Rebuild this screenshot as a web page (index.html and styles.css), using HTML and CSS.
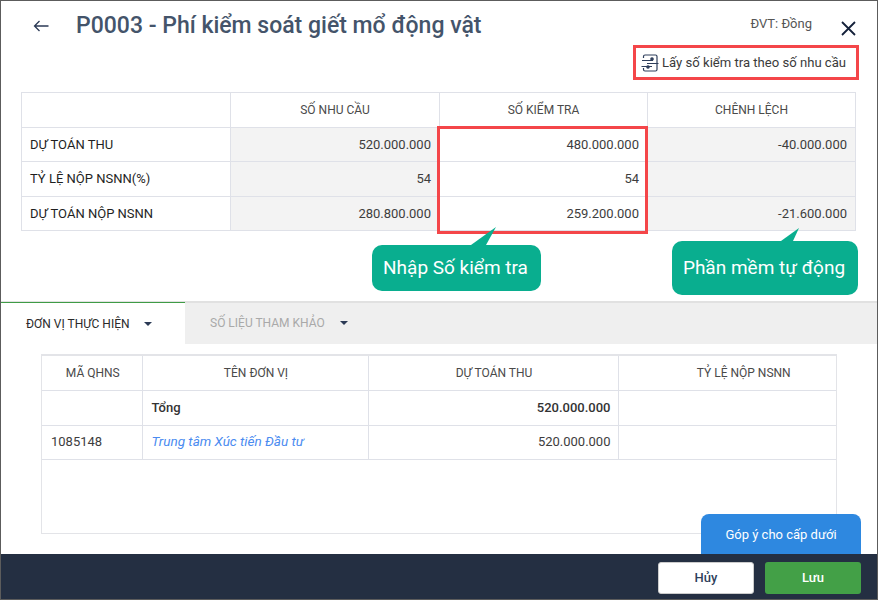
FILE: index.html
```html
<!DOCTYPE html>
<html lang="en">
<head>
    <meta charset="UTF-8">
    <title>P0003 - Phí kiểm soát giết mổ động vật</title>
    <link rel="stylesheet" href="styles.css">
</head>
<body>
    <div class="dialog">
        <div class="header">
            <svg class="back" width="16" height="14" viewBox="0 0 16 14"><path d="M15.500 7H1.500M6.500 2 1.500 7l5 5" fill="none" stroke="#2b3a55" stroke-width="1.300"/></svg>
            <h1 class="title">P0003 - Phí kiểm soát giết mổ động vật</h1>
            <span class="unit">ĐVT: Đồng</span>
            <svg class="close" width="15" height="15" viewBox="0 0 15 15"><path d="M1 1 14 14M14 1 1 14" fill="none" stroke="#14213a" stroke-width="1.800"/></svg>
        </div>

        <div class="action-row">
            <div class="get-number">
                <svg width="18" height="18" viewBox="0 0 18 18" fill="none" stroke="#2f3f5c" stroke-width="1.200">
                    <path d="M2.500 4V2.500A1.500 1.500 0 0 1 4 1H14.500A1.500 1.500 0 0 1 16 2.500V15.500A1.500 1.500 0 0 1 14.500 17H4A1.500 1.500 0 0 1 2.500 15.500V14"/>
                    <path d="M1 6.500H12M6 9.500H17.500M.5 12.500H11"/>
                    <circle cx="11" cy="5" r="1.200" fill="#2f3f5c"/>
                    <circle cx="7" cy="13" r="1.200" fill="#2f3f5c"/>
                </svg>
                Lấy số kiểm tra theo số nhu cầu
            </div>
        </div>

        <div class="top-table-wrap">
            <table class="grid top-table">
                <tr class="head">
                    <th></th>
                    <th>SỐ NHU CẦU</th>
                    <th>SỐ KIỂM TRA</th>
                    <th>CHÊNH LỆCH</th>
                </tr>
                <tr>
                    <td class="label">DỰ TOÁN THU</td>
                    <td class="num gray">520.000.000</td>
                    <td class="num">480.000.000</td>
                    <td class="num gray">-40.000.000</td>
                </tr>
                <tr>
                    <td class="label">TỶ LỆ NỘP NSNN(%)</td>
                    <td class="num gray">54</td>
                    <td class="num">54</td>
                    <td class="num gray"></td>
                </tr>
                <tr>
                    <td class="label">DỰ TOÁN NỘP NSNN</td>
                    <td class="num gray">280.800.000</td>
                    <td class="num">259.200.000</td>
                    <td class="num gray">-21.600.000</td>
                </tr>
            </table>
            <div class="red-box"></div>
            <div class="callout callout-input">
                <svg class="tail" width="30" height="18" viewBox="0 0 30 18"><path d="M0 18 25 0 15 18Z" fill="#09ae8f"/></svg>
                Nhập Số kiểm tra
            </div>
            <div class="callout callout-auto">
                <svg class="tail" width="20" height="13" viewBox="0 0 20 13"><path d="M0 13 18 0 12 13Z" fill="#09ae8f"/></svg>
                Phần mềm tự động
            </div>
        </div>

        <div class="tabs">
            <div class="tab active">ĐƠN VỊ THỰC HIỆN <span class="caret"></span></div>
            <div class="tab">SỐ LIỆU THAM KHẢO <span class="caret"></span></div>
        </div>

        <div class="bottom-table-wrap">
            <table class="grid bottom-table">
                <tr class="head">
                    <th>MÃ QHNS</th>
                    <th>TÊN ĐƠN VỊ</th>
                    <th>DỰ TOÁN THU</th>
                    <th class="rate">TỶ LỆ NỘP NSNN</th>
                </tr>
                <tr class="total">
                    <td></td>
                    <td>Tổng</td>
                    <td class="num">520.000.000</td>
                    <td></td>
                </tr>
                <tr class="unit-row">
                    <td>1085148</td>
                    <td class="link">Trung tâm Xúc tiến Đầu tư</td>
                    <td class="num">520.000.000</td>
                    <td></td>
                </tr>
            </table>
        </div>

        <div class="feedback">Góp ý cho cấp dưới</div>

        <div class="footer">
            <button class="btn cancel">Hủy</button>
            <button class="btn save">Lưu</button>
        </div>
    </div>
</body>
</html>
```

FILE: styles.css
```css
* {
    box-sizing: border-box;
}
body {
    margin: 0;
    font-family: Roboto, "Liberation Sans", sans-serif;
    background: white;
}
.dialog {
    position: relative;
    display: flex;
    flex-direction: column;
    width: 878px;
    height: 600px;
    border: 1px solid #5c5c5c;
    color: #3d3d3d;
    overflow: hidden;
}
.header {
    display: flex;
    align-items: flex-start;
    height: 44px;
    padding: 18px 21px 0 32px;
}
.title {
    margin: -7px 0 0 27px;
    font-size: 23px;
    line-height: 28px;
    font-weight: 500;
    color: #44546a;
    flex: 1;
}
.unit {
    margin: -3px 29px 0 0;
    font-size: 13px;
    line-height: 16px;
    color: #555;
}
.close {
    margin: 2px 0 0 0;
}
.action-row {
    display: flex;
    justify-content: flex-end;
    padding-right: 18px;
    height: 47px;
}
.get-number {
    display: flex;
    align-items: center;
    gap: 3px;
    height: 35px;
    width: 226px;
    padding: 0 0 0 5px;
    border: 3px solid #f44649;
    font-size: 13.100px;
    color: #3a3a3a;
}
.top-table-wrap {
    position: relative;
    height: 209px;
    padding-left: 20px;
}
.grid {
    border-collapse: collapse;
    table-layout: fixed;
    font-size: 13px;
}
.grid th, .grid td {
    border: 1px solid #dfe1e8;
    padding: 0 8px;
}
.grid th {
    font-size: 12px;
    font-weight: 400;
    color: #4a4a4a;
}
.top-table {
    width: 835px;
}
.top-table th, .top-table td {
    height: 34.500px;
}
.top-table th:nth-child(1) {
    width: 209px;
}
.top-table th:nth-child(2) {
    width: 209px;
}
.top-table th:nth-child(3) {
    width: 208px;
}
.top-table .label {
    color: #1f1f1f;
}
.num {
    text-align: right;
}
.gray {
    background: #f3f3f3;
}
.red-box {
    position: absolute;
    left: 436px;
    top: 34px;
    width: 211px;
    height: 108px;
    border: 3px solid #f44649;
}
.callout {
    position: absolute;
    display: flex;
    align-items: center;
    justify-content: center;
    padding: 0 2px 2px 0;
    background: #09ae8f;
    color: white;
    font-size: 19px;
    border-radius: 10px;
}
.callout-input {
    left: 371px;
    top: 153px;
    width: 169px;
    height: 46px;
}
.callout-auto {
    left: 671px;
    top: 149px;
    width: 186px;
    height: 54px;
}
.tail {
    position: absolute;
}
.callout-input .tail {
    left: 99px;
    top: -18px;
}
.callout-auto .tail {
    left: 109px;
    top: -13px;
}
.tabs {
    display: flex;
    height: 43px;
    border-top: 2px solid #e1e1e1;
    background: #efefef;
}
.tab {
    display: flex;
    align-items: center;
    width: 184px;
    margin-top: -1px;
    padding-left: 25px;
    font-size: 12px;
    color: #a9a9a9;
    white-space: pre;
}
.tab + .tab {
    padding-left: 25px;
    width: 200px;
}
.tab.active {
    background: white;
    border-top: 1px solid #3f9b46;
    color: #2a2a2a;
}
.caret {
    width: 0;
    height: 0;
    margin-left: 11px;
    border: 4px solid transparent;
    border-top: 4px solid #2b3a55;
    border-bottom: 0;
}
.tab + .tab .caret {
    margin-left: 12px;
}
.bottom-table-wrap {
    width: 796px;
    height: 180px;
    margin: 10px 0 0 40px;
    border: 1px solid #e3e4e8;
    border-top-width: 2px;
}
.bottom-table {
    width: 794px;
    border-style: hidden;
    border-bottom: 1px solid #dfe1e8;
}
.bottom-table th, .bottom-table td {
    height: 34.500px;
    padding: 0 7px 0 9px;
}
.bottom-table th:nth-child(1) {
    width: 100px;
}
.bottom-table th:nth-child(2) {
    width: 226px;
}
.bottom-table th:nth-child(3) {
    width: 250px;
}
.bottom-table .rate {
    padding-left: 40px;
}
.bottom-table .unit-row td {
    padding-bottom: 2px;
}
.total td {
    font-weight: 500;
    color: #333;
}
.link {
    font-style: italic;
    font-size: 13.500px;
    color: #4a8bf0;
}
.feedback {
    position: absolute;
    right: 16px;
    bottom: 45px;
    width: 160px;
    height: 40px;
    display: flex;
    align-items: center;
    justify-content: center;
    background: #2e88e0;
    color: white;
    font-size: 13px;
    border-radius: 8px 8px 0 0;
}
.footer {
    display: flex;
    justify-content: flex-end;
    align-items: center;
    gap: 11px;
    height: 45px;
    margin-top: auto;
    padding: 2px 16px 0 0;
    background: #242f42;
}
.btn {
    width: 96px;
    height: 32px;
    border: none;
    border-radius: 3px;
    font-family: Roboto, "Liberation Sans", sans-serif;
    font-size: 13px;
    font-weight: 500;
}
.cancel {
    background: white;
    color: #2f3f5c;
    border: 1px solid #ccc;
}
.save {
    background: #43a047;
    color: white;
}
```
